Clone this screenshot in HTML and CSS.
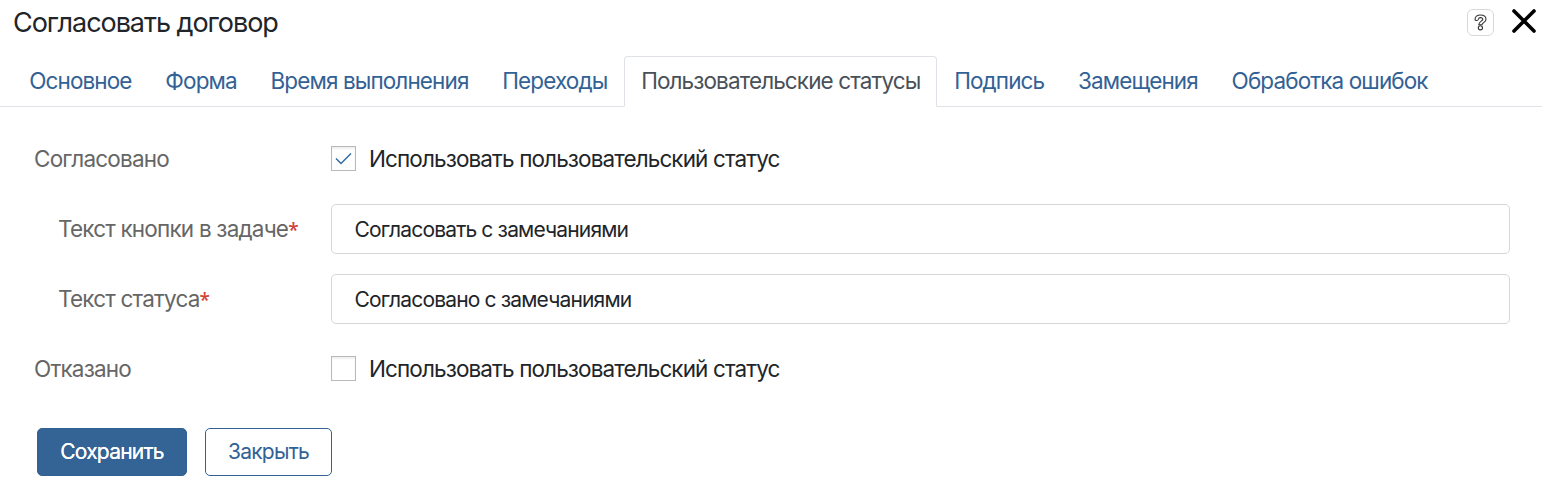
FILE: index.html
```html
<!DOCTYPE html>
<html lang="ru">
<head>
<meta charset="utf-8">
<title>Согласовать договор</title>
<link rel="stylesheet" href="styles.css">
</head>
<body>
<header class="header">
  <h1 class="title">Согласовать договор</h1>
  <div class="tools">
    <button class="help" aria-label="Справка"><svg width="13" height="17" viewBox="0 0 13 17"><path d="M1 5.500C1 2.500 3.200 1 6.300 1S12 2.600 12 5.300c0 3.200-4 3.300-4 5.500H4.800c0-3.700 4-3.500 4-5.500 0-1-.8-1.700-2.200-1.700-1.300 0-2.100.7-2.300 1.900-.2 1.300-3.300 1.300-3.300 0z"/><circle cx="6.400" cy="13.800" r="2.100"/></svg></button>
    <button class="close" aria-label="Закрыть окно"><svg width="26" height="26" viewBox="0 0 26 26"><path d="M3 3l20 20M23 3L3 23"/></svg></button>
  </div>
</header>
<nav class="tabs">
  <a class="tab">Основное</a>
  <a class="tab">Форма</a>
  <a class="tab">Время выполнения</a>
  <a class="tab">Переходы</a>
  <a class="tab active">Пользовательские статусы</a>
  <a class="tab">Подпись</a>
  <a class="tab">Замещения</a>
  <a class="tab">Обработка ошибок</a>
</nav>
<main class="form">
  <div class="row check-row">
    <div class="label">Согласовано</div>
    <label class="check"><span class="box"><svg width="17" height="14" viewBox="0 0 17 14"><path d="M1 6.500l5 5L16 1.500"/></svg></span>Использовать пользовательский статус</label>
  </div>
  <div class="row field-row">
    <div class="label sub">Текст кнопки в задаче<span class="req">*</span></div>
    <div class="input">Согласовать с замечаниями</div>
  </div>
  <div class="row field-row">
    <div class="label sub">Текст статуса<span class="req">*</span></div>
    <div class="input">Согласовано с замечаниями</div>
  </div>
  <div class="row check-row">
    <div class="label">Отказано</div>
    <label class="check"><span class="box"></span>Использовать пользовательский статус</label>
  </div>
</main>
<footer class="actions">
  <button class="btn primary">Сохранить</button>
  <button class="btn secondary">Закрыть</button>
</footer>
</body>
</html>
```

FILE: styles.css
```css
* { box-sizing: border-box; }
body { margin: 0; width: 1544px; height: 482px; overflow: hidden; background: #fff; color: #212529; font: 22.5px/30px Inter, "Liberation Sans", sans-serif; letter-spacing: -0.89px; }
button { font: inherit; letter-spacing: inherit; padding: 0; }
.header { height: 56px; display: flex; justify-content: space-between; padding: 8px 7px 0 13px; }
.title { margin: 0; font-size: 27px; font-weight: 400; line-height: 30px; letter-spacing: -1.05px; }
.tools { display: flex; gap: 17px; }
.help { width: 27px; height: 27px; margin-top: 1px; border: 1px solid #d8d8d8; border-radius: 6px; background: #fff; display: grid; place-items: center; }
.help svg { display: block; }
.help path, .help circle { fill: #fff; stroke: #333; stroke-width: 1.1; }
.close { width: 26px; height: 26px; border: 0; background: none; }
.close svg { display: block; }
.close path { stroke: #000; stroke-width: 3.6; stroke-linecap: round; }
.tabs { display: flex; width: 1542px; height: 51px; padding-left: 12.3px; border-bottom: 1px solid #dee2e6; }
.tab { height: 51px; padding: 9px 15.9px; border: 1px solid transparent; color: #326295; white-space: nowrap; }
.tab.active { background: #fff; color: #495057; border-color: #dee2e6; border-bottom-color: #fff; border-radius: 4px 4px 0 0; }
.form { padding: 37px 34px 0; }
.row { display: grid; grid-template-columns: 297px 1fr; align-items: center; }
.check-row { height: 29px; line-height: 29px; }
.field-row { height: 50px; margin-top: 20px; }
.check-row + .field-row { margin-top: 31px; }
.field-row + .check-row { margin-top: 30px; }
.label { color: #666; white-space: nowrap; letter-spacing: -0.8px; }
.sub { padding-left: 24px; }
.req { color: #d04437; font: 600 19px/1 "Open Sans", sans-serif; }
.input { height: 50px; padding: 10px 22.5px; border: 1px solid #d6d6d6; border-radius: 5px; font-size: 21px; letter-spacing: -0.84px; line-height: 30px; }
.check { display: flex; align-items: center; gap: 13px; }
.box { width: 25px; height: 25px; border: 1px solid #b9b9b9; display: grid; place-items: center; box-shadow: inset 0 2px 2px #f0f0f0; }
.box path { fill: none; stroke: #326ba5; stroke-width: 1.5; }
.actions { display: flex; gap: 18px; padding: 45px 37px 0; }
.btn { height: 48px; border: 1px solid #326295; border-radius: 5px; font-size: 21px; letter-spacing: -0.78px; }
.primary { width: 150px; background: #346496; color: #fff; text-shadow: 0 0 0.5px #fff; }
.secondary { width: 127px; background: #fff; color: #326295; }
```
